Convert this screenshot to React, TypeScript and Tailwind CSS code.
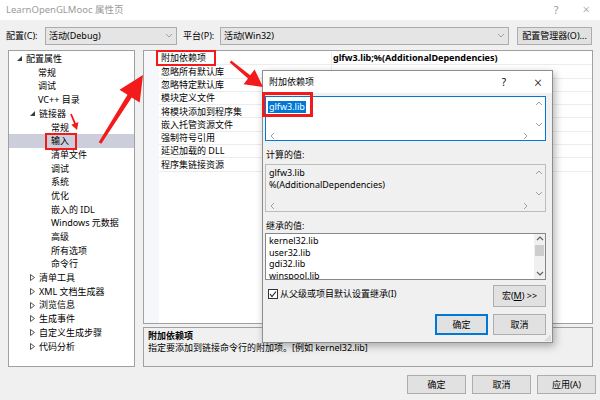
import React from "react";

const Open = () => (
  <svg width="5" height="5" viewBox="0 0 5 5"><polygon points="5,0 5,5 0,5" fill="#3c3c3c" /></svg>
);
const Closed = () => (
  <svg width="5" height="7" viewBox="0 0 5 7"><polygon points="0.5,0.5 4.5,3.5 0.5,6.5" fill="none" stroke="#555" strokeWidth="1" /></svg>
);
const Chev = ({ dir }: { dir: "up" | "down" | "left" | "right" }) => {
  const pts =
    dir === "up" ? "1,5 4,2 7,5" : dir === "down" ? "1,2 4,5 7,2" : dir === "left" ? "5,1 2,4 5,7" : "2,1 5,4 2,7";
  return (
    <svg width="8" height="8" viewBox="0 0 8 8"><polyline points={pts} fill="none" stroke="#a0a0a0" strokeWidth="1" /></svg>
  );
};

type Item = { t: string; k: "l0" | "l1" | "l1t" | "l2"; tri?: "o" | "c"; sel?: boolean };
const tree: Item[] = [
  { t: "配置属性", k: "l0", tri: "o" },
  { t: "常规", k: "l1" },
  { t: "调试", k: "l1" },
  { t: "VC++ 目录", k: "l1" },
  { t: "链接器", k: "l1t", tri: "o" },
  { t: "常规", k: "l2" },
  { t: "输入", k: "l2", sel: true },
  { t: "清单文件", k: "l2" },
  { t: "调试", k: "l2" },
  { t: "系统", k: "l2" },
  { t: "优化", k: "l2" },
  { t: "嵌入的 IDL", k: "l2" },
  { t: "Windows 元数据", k: "l2" },
  { t: "高级", k: "l2" },
  { t: "所有选项", k: "l2" },
  { t: "命令行", k: "l2" },
  { t: "清单工具", k: "l1t", tri: "c" },
  { t: "XML 文档生成器", k: "l1t", tri: "c" },
  { t: "浏览信息", k: "l1t", tri: "c" },
  { t: "生成事件", k: "l1t", tri: "c" },
  { t: "自定义生成步骤", k: "l1t", tri: "c" },
  { t: "代码分析", k: "l1t", tri: "c" },
];

const props = [
  "附加依赖项",
  "忽略所有默认库",
  "忽略特定默认库",
  "模块定义文件",
  "将模块添加到程序集",
  "嵌入托管资源文件",
  "强制符号引用",
  "延迟加载的 DLL",
  "程序集链接资源",
];

const spacer = (k: Item["k"]) =>
  k === "l0" ? "w-[17px]" : k === "l1" ? "w-[29px]" : k === "l1t" ? "w-[30px]" : "w-[42px]";

export default function App() {
  return (
    <div
      className="relative w-[600px] h-[400px] overflow-hidden bg-[#f0f0f0] text-[9px] text-black"
      style={{ fontFamily: '"Noto Sans", "Noto Sans CJK SC", sans-serif' }}
    >
      {/* title bar */}
      <div className="h-[20px] bg-white flex items-center pl-[6px] pr-[10px]">
        <span className="text-[9.5px] text-[#9a9a9a] flex-1">LearnOpenGLMooc 属性页</span>
        <span className="text-[11px] text-[#9a9a9a] mr-[24px]">?</span>
        <span className="text-[13px] text-[#9a9a9a] font-light">×</span>
      </div>

      {/* config row */}
      <div className="flex items-center h-[18px] mt-[7px] pl-[6px]">
        <span className="w-[39px]">配置(C):</span>
        <div className="w-[132px] h-[18px] bg-[#e5e5e5] border border-[#acacac] flex items-center pl-[3px] pr-[3px]">
          <span className="flex-1">活动(Debug)</span>
          <Chev dir="down" />
        </div>
        <span className="ml-[6px] w-[37px]">平台(P):</span>
        <div className="w-[289px] h-[18px] bg-[#e5e5e5] border border-[#acacac] flex items-center pl-[3px] pr-[3px]">
          <span className="flex-1">活动(Win32)</span>
          <Chev dir="down" />
        </div>
        <div className="ml-[8px] w-[75px] h-[18px] bg-[#e1e1e1] border border-[#adadad] flex items-center justify-center">
          配置管理器(O)...
        </div>
      </div>

      {/* body */}
      <div className="flex mt-[5px] pl-[8px] h-[317px]">
        {/* tree */}
        <div className="w-[127px] h-[317px] bg-white border border-[#a0a0a0] pt-[1px]">
          {tree.map((it, i) => (
            <div key={i} className={`flex items-center h-[13.7px] ${it.sel ? "bg-[#cccedb]" : ""}`}>
              <span className={`${spacer(it.k)} flex justify-end items-center pr-[4px] shrink-0`}>
                {it.tri === "o" ? <Open /> : it.tri === "c" ? <Closed /> : null}
              </span>
              <span className="whitespace-nowrap">{it.t}</span>
            </div>
          ))}
        </div>

        {/* right side */}
        <div className="ml-[8px] w-[450px] flex flex-col">
          <div className="h-[274px] bg-white border border-[#a0a0a0] flex pt-[1px]">
            <div className="w-[15px] bg-[#f5f7fb]" />
            <div className="flex-1">
              {props.map((p, i) => (
                <div key={i} className="flex h-[13.3px] border-b border-[#ececec]">
                  <div className="w-[173px] pl-[2px] flex items-center border-r border-[#ececec] whitespace-nowrap">{p}</div>
                  <div className="flex-1 pl-[1px] flex items-center font-bold whitespace-nowrap">
                    {i === 0 ? "glfw3.lib;%(AdditionalDependencies)" : ""}
                  </div>
                </div>
              ))}
            </div>
          </div>
          <div className="mt-[3px] h-[40px] border border-[#a0a0a0] px-[4px] pt-[2px] leading-[12px]">
            <div className="font-bold">附加依赖项</div>
            <div>指定要添加到链接命令行的附加项。[例如 kernel32.lib]</div>
          </div>
        </div>
      </div>

      {/* bottom buttons */}
      <div className="flex justify-end gap-[6px] pr-[4px] mt-[8px]">
        <div className="w-[59px] h-[19px] bg-[#e1e1e1] border border-[#adadad] flex items-center justify-center">确定</div>
        <div className="w-[59px] h-[19px] bg-[#e1e1e1] border border-[#adadad] flex items-center justify-center">取消</div>
        <div className="w-[59px] h-[19px] bg-[#e1e1e1] border border-[#adadad] flex items-center justify-center">应用(A)</div>
      </div>

      {/* dialog */}
      <div className="absolute left-[262px] top-[70px] w-[291px] h-[273px] bg-[#f0f0f0] border border-[#8e8e8e] shadow-[2px_3px_8px_rgba(0,0,0,0.3)] flex flex-col">
        <div className="h-[22px] bg-white flex items-center pl-[6px] pr-[10px] shrink-0">
          <span className="flex-1">附加依赖项</span>
          <span className="text-[10px] mr-[28px]">?</span>
          <span className="text-[14px] font-light">×</span>
        </div>
        <div className="pl-[2px] pr-[6px] flex flex-col">
          {/* edit box */}
          <div className="mt-[3px] h-[45px] bg-white border border-[#0078d7] flex">
            <div className="flex-1 flex flex-col">
              <div className="flex-1 pl-[2px] pt-[3px]">
                <span className="bg-[#0078d7] text-white px-[1px] leading-[12px] inline-block">glfw3.lib</span>
              </div>
              <div className="h-[9px] flex justify-between items-center px-[3px]">
                <Chev dir="left" />
                <Chev dir="right" />
              </div>
            </div>
            <div className="w-[12px] flex flex-col justify-between items-center py-[3px] pb-[11px]">
              <Chev dir="up" />
              <Chev dir="down" />
            </div>
          </div>
          <div className="mt-[8px] h-[12px] leading-[12px] pl-[1px]">计算的值:</div>
          <div className="mt-[3px] h-[48px] bg-[#f0f0f0] border border-[#bcbcbc] flex">
            <div className="flex-1 flex flex-col">
              <div className="flex-1 pl-[3px] pt-[2px] leading-[12px]">
                <div>glfw3.lib</div>
                <div>%(AdditionalDependencies)</div>
              </div>
              <div className="h-[10px] flex justify-between items-center px-[3px]">
                <Chev dir="left" />
                <Chev dir="right" />
              </div>
            </div>
            <div className="w-[12px] flex flex-col justify-between items-center pt-[4px] pb-[13px]">
              <Chev dir="up" />
              <Chev dir="down" />
            </div>
          </div>
          <div className="mt-[8px] h-[12px] leading-[12px] pl-[1px]">继承的值:</div>
          <div className="mt-[1px] h-[47px] bg-white border border-[#828790] flex overflow-hidden">
            <div className="flex-1 pl-[3px] pt-[1px] leading-[11.7px]">
              <div>kernel32.lib</div>
              <div>user32.lib</div>
              <div>gdi32.lib</div>
              <div>winspool.lib</div>
            </div>
            <div className="w-[11px] bg-[#f0f0f0] flex flex-col items-center">
              <div className="h-[10px] flex items-center"><svg width="8" height="8" viewBox="0 0 8 8"><polyline points="1,5 4,2 7,5" fill="none" stroke="#606060" strokeWidth="1.2" /></svg></div>
              <div className="w-[9px] h-[11px] bg-[#cdcdcd] mt-[1px]" />
              <div className="flex-1" />
              <div className="h-[10px] flex items-center"><svg width="8" height="8" viewBox="0 0 8 8"><polyline points="1,2 4,5 7,2" fill="none" stroke="#606060" strokeWidth="1.2" /></svg></div>
            </div>
          </div>
          <div className="mt-[5px] flex items-start">
            <div className="mt-[4px] ml-[3px] w-[10px] h-[10px] bg-white border border-[#333] flex items-center justify-center">
              <svg width="8" height="8" viewBox="0 0 8 8"><polyline points="1,4 3,6.5 7,1.5" fill="none" stroke="#222" strokeWidth="1.1" /></svg>
            </div>
            <span className="ml-[2px] mt-[3px] flex-1 leading-[12px]">从父级或项目默认设置继承(I)</span>
            <div className="w-[53px] h-[22px] bg-[#e1e1e1] border border-[#adadad] flex items-center justify-center">
              宏(<span className="underline">M</span>) &gt;&gt;
            </div>
          </div>
          <div className="mt-[7px] flex justify-end gap-[5px]">
            <div className="w-[53px] h-[21px] bg-[#e1e1e1] border-2 border-[#0078d7] flex items-center justify-center">确定</div>
            <div className="w-[53px] h-[21px] bg-[#e1e1e1] border border-[#adadad] flex items-center justify-center">取消</div>
          </div>
        </div>
        <svg className="absolute right-[1px] bottom-[1px]" width="8" height="8" viewBox="0 0 8 8">
          <circle cx="7" cy="3" r="0.6" fill="#999" />
          <circle cx="5" cy="5" r="0.6" fill="#999" />
          <circle cx="7" cy="5" r="0.6" fill="#999" />
          <circle cx="3" cy="7" r="0.6" fill="#999" />
          <circle cx="5" cy="7" r="0.6" fill="#999" />
          <circle cx="7" cy="7" r="0.6" fill="#999" />
        </svg>
      </div>

      {/* red highlight boxes */}
      <div className="absolute left-[45px] top-[133px] w-[32px] h-[17px] border-2 border-[#f21a1a]" />
      <div className="absolute left-[156px] top-[50px] w-[60px] h-[16px] border-2 border-[#f21a1a]" />
      <div className="absolute left-[262px] top-[92px] w-[51px] h-[25px] border-[3px] border-[#f21a1a]" />

      {/* arrows */}
      <svg className="absolute left-0 top-0 pointer-events-none" width="600" height="400" viewBox="0 0 600 400">
        <polygon
          points="98.7,142.2 127.5,94.8 119.5,89.7 143,75 139.7,102.5 131.7,97.4 101.3,143.8"
          fill="#f21a1a"
        />
        <polygon
          points="231.2,60.6 250.2,75.3 254.6,69.5 263,87 243.6,84.2 248.0,78.5 229.8,62.4"
          fill="#f21a1a"
        />
        <polygon
          points="70.2,114.3 74.0,123.8 71.3,124.8 77,130 78.4,122.2 75.8,123.1 71.8,113.7"
          fill="#f21a1a"
        />
      </svg>
    </div>
  );
}
